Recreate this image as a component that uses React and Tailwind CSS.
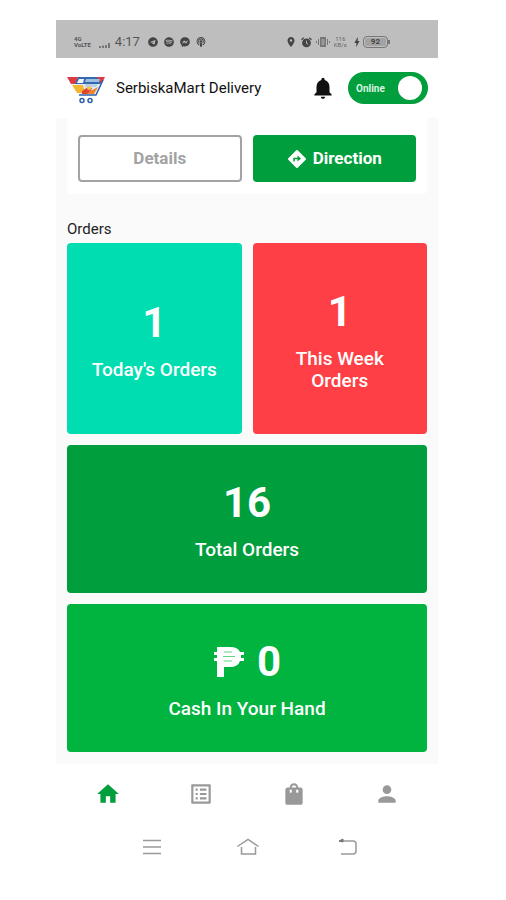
import { useState } from 'react';
import {
  MdHome, MdListAlt, MdLocationOn, MdNotifications, MdPerson, MdShoppingBag, MdBolt,
} from 'react-icons/md';
import { FaFacebookMessenger, FaPodcast, FaSpotify, FaTelegram } from 'react-icons/fa';

const TABS = [
  { id: 'home', label: 'Home', icon: MdHome },
  { id: 'orders', label: 'Order list', icon: MdListAlt },
  { id: 'bag', label: 'Bag', icon: MdShoppingBag },
  { id: 'profile', label: 'Profile', icon: MdPerson },
];

function Logo() {
  return (
    <svg viewBox="0 -4 38 32" className="h-8 w-[38px] shrink-0" aria-hidden="true">
      <path d="M0 1h11l-2 7H4z" fill="#dd3b42" />
      <path d="M29 1h9l-3 6h-6z" fill="#dd3b42" />
      <path d="M11 1h19l4 7H8z" fill="#3568ad" />
      <path d="M12 3h5l-1 4h-6z" fill="#f1f6fc" />
      <path d="M19 3h14l-1 3H18z" fill="#9cc0e2" />
      <path d="M8 8h26l-6 10H13z" fill="#e4edf6" />
      <path d="M5 9h11l2 8h-8z" fill="#f4b62c" />
      <path d="M18 8h13l-2 3H18z" fill="#b9d2ea" />
      <path d="M15 15l6-4 4 1-3 6h-7z" fill="#df4437" />
      <path d="M23 15l8-4-4 7h-7z" fill="#f0842b" />
      <circle cx="22" cy="12" r="2" fill="#f6c544" />
      <path d="M36 4l-7 15H12" fill="none" stroke="#2c5fa8" strokeWidth="1.5" />
      <circle cx="15" cy="24.5" r="2" fill="#fff" stroke="#2c5fa8" strokeWidth="1.5" />
      <circle cx="23" cy="24.5" r="2" fill="#fff" stroke="#2c5fa8" strokeWidth="1.5" />
    </svg>
  );
}

function SignalBars() {
  return (
    <svg viewBox="0 0 12 5" className="h-[5px] w-3" fill="#777" aria-hidden="true">
      <path d="M0 3h2v2H0zM3 2.500h2V5H3zM6 2h2v3H6zM9 0h2v5H9z" />
    </svg>
  );
}

function AlarmIcon() {
  return (
    <svg viewBox="0 0 12 12" className="h-[11px] w-[11px]" aria-hidden="true">
      <circle cx="6" cy="6.500" r="4.800" fill="#444" />
      <path d="M0.500 3L3 0.800M11.500 3L9 0.800" stroke="#444" strokeWidth="1.400" />
      <path d="M6 4v3l2 1" fill="none" stroke="#bebebe" strokeWidth="1" />
    </svg>
  );
}

function VibrateIcon() {
  return (
    <svg viewBox="0 0 14 12" className="h-3 w-3.5" fill="#777" aria-hidden="true">
      <path d="M4 1h6v10H4zM2 3h1v6H2zM0 5h1v2H0zM11 3h1v6h-1zM13 5h1v2h-1z" />
      <path d="M5.500 3h3v6h-3z" fill="#999" />
    </svg>
  );
}

function StatusBar() {
  return (
    <div className="flex h-[38px] items-center bg-[#bebebe] pt-1.5 pr-12 pl-[18px] text-[#444]">
      <div className="flex flex-col text-[6px] leading-[6px] font-bold text-[#555]">
        <span>4G</span>
        <span>VoLTE</span>
      </div>
      <div className="ml-2 pt-1.5"><SignalBars /></div>
      <span className="ml-1 text-[13px] text-[#555]">4:17</span>
      <div className="ml-2 flex items-center gap-1.5 text-[10px]">
        <FaTelegram />
        <FaSpotify />
        <FaFacebookMessenger />
        <FaPodcast />
      </div>
      <div className="ml-auto flex items-center gap-1">
        <MdLocationOn className="text-[12px]" />
        <AlarmIcon />
        <VibrateIcon />
        <div className="flex flex-col text-center text-[6px] leading-[6px] text-[#666]">
          <span>116</span>
          <span>KB/s</span>
        </div>
        <div className="flex items-center">
          <MdBolt className="text-[12px]" />
          <span className="rounded border border-[#777] p-px">
            <span className="block rounded-xs bg-[#a3a3a3] px-1.5 text-[8px] leading-2 font-bold">92</span>
          </span>
          <span className="h-1 w-0.5 bg-[#777]" />
        </div>
      </div>
    </div>
  );
}

function DirectionIcon() {
  return (
    <svg viewBox="0 0 20 20" className="h-5 w-5" aria-hidden="true">
      <path
        d="M10 2l8 8-8 8-8-8z"
        fill="#fff"
        stroke="#fff"
        strokeWidth="2"
        strokeLinejoin="round"
      />
      <path d="M7 12.500V9.500h4" fill="none" stroke="#009e3c" strokeWidth="1.500" />
      <path d="M10.500 6.500l3.500 3-3.500 3z" fill="#009e3c" />
    </svg>
  );
}

function PesoSign() {
  return (
    <svg viewBox="0 0 32 32" className="h-8 w-8" role="img" aria-label="Peso">
      <path
        fill="#fff"
        d="M4 1h13q8 0 10 5h4v3h-3v3h3v3h-4q-2 6-10 6h-6v10H4V15H1v-3h3V9H1V6h3z"
      />
      <path d="M11 6h8M10 10.500h12M11 15h8" stroke="#00b43f" strokeWidth="1" opacity="0.6" />
    </svg>
  );
}

function StatCard({ value, label, className }) {
  return (
    <div className={`flex flex-col items-center justify-center gap-3 rounded pt-0.5 text-white ${className}`}>
      <div className="flex items-center gap-3 text-[42px] leading-[48px] font-bold">{value}</div>
      <div className="text-center text-[19px] leading-[22px] font-medium">{label}</div>
    </div>
  );
}

export default function App() {
  const [online, setOnline] = useState(true);
  const [tab, setTab] = useState('home');

  return (
    <div className="min-h-screen bg-white pt-5 pr-[68px] pl-14 font-['Roboto',sans-serif]">
      <StatusBar />

      <header className="flex h-[60px] items-center pr-2.5 pl-[11px]">
        <Logo />
        <h1 className="ml-[11px] text-[15px] whitespace-nowrap text-[#111]">SerbiskaMart Delivery</h1>
        <button className="ml-auto text-[26px] text-[#111]" aria-label="Notifications">
          <MdNotifications />
        </button>
        <label className="relative ml-3 flex h-8 w-20 cursor-pointer items-center justify-between rounded-full bg-[#009e3c] pr-1.5 pl-2">
          <input
            type="checkbox"
            className="sr-only"
            checked={online}
            onChange={(e) => setOnline(e.target.checked)}
          />
          <span className="text-[10px] font-bold text-[#d8f5e0]">{online ? 'Online' : 'Offline'}</span>
          <span className="h-6 w-6 rounded-full bg-white" />
        </label>
      </header>

      <main className="bg-[#fafafa] px-[11px] pb-3">
        {/* Current order */}
        <div className="grid grid-cols-2 gap-[11px] rounded-b bg-white px-[11px] pt-[17px] pb-3">
          <button className="h-[47px] rounded border-2 border-[#a3a3a3] text-[17px] font-bold text-[#a3a3a3]">
            Details
          </button>
          <button className="flex h-[47px] items-center justify-center gap-1.5 rounded bg-[#009e3c] text-[17px] font-bold text-white">
            <DirectionIcon />
            Direction
          </button>
        </div>

        <h2 className="mt-[25px] mb-1 text-[15px] leading-5 text-[#222]">Orders</h2>
        <div className="grid grid-cols-2 gap-[11px]">
          <StatCard value="1" label="Today's Orders" className="h-[191px] bg-[#00ddb0]" />
          <StatCard value="1" label="This Week Orders" className="h-[191px] bg-[#ff3f46] px-8" />
          <StatCard value="16" label="Total Orders" className="col-span-2 h-[148px] bg-[#009e3c]" />
          <StatCard
            value={<><PesoSign /><span>0</span></>}
            label="Cash In Your Hand"
            className="col-span-2 h-[148px] bg-[#00b43f]"
          />
        </div>
      </main>

      <nav className="flex h-[60px] items-center px-[5px]">
        {TABS.map(({ id, label, icon: Icon }) => (
          <button
            key={id}
            aria-label={label}
            onClick={() => setTab(id)}
            className={`flex flex-1 justify-center text-[26px] ${tab === id ? 'text-[#009e3c]' : 'text-[#999]'}`}
          >
            <Icon />
          </button>
        ))}
      </nav>

      {/* System navigation */}
      <div className="flex h-[46px] items-center justify-between pr-20 pl-[84px]">
        <button aria-label="Recent apps">
          <svg viewBox="0 0 24 20" className="h-5 w-6" fill="none" stroke="#999" strokeWidth="1.5">
            <path d="M3 3.500h18M3 10h18M3 16.500h18" />
          </svg>
        </button>
        <button aria-label="Home screen">
          <svg viewBox="0 0 24 20" className="h-5 w-6" fill="none" stroke="#999" strokeWidth="1.5">
            <path d="M0.500 9.500L11 2.500l10.500 7M4.500 10v7h14v-7" />
          </svg>
        </button>
        <button aria-label="Back">
          <svg viewBox="0 0 24 20" className="h-5 w-6" fill="none" stroke="#999" strokeWidth="1.5">
            <path d="M5 4h14q3 0 3 3v7q0 3-3 3H7" />
            <path d="M5 4l4-2v3z" fill="#777" stroke="#777" strokeWidth="1" />
          </svg>
        </button>
      </div>
    </div>
  );
}
